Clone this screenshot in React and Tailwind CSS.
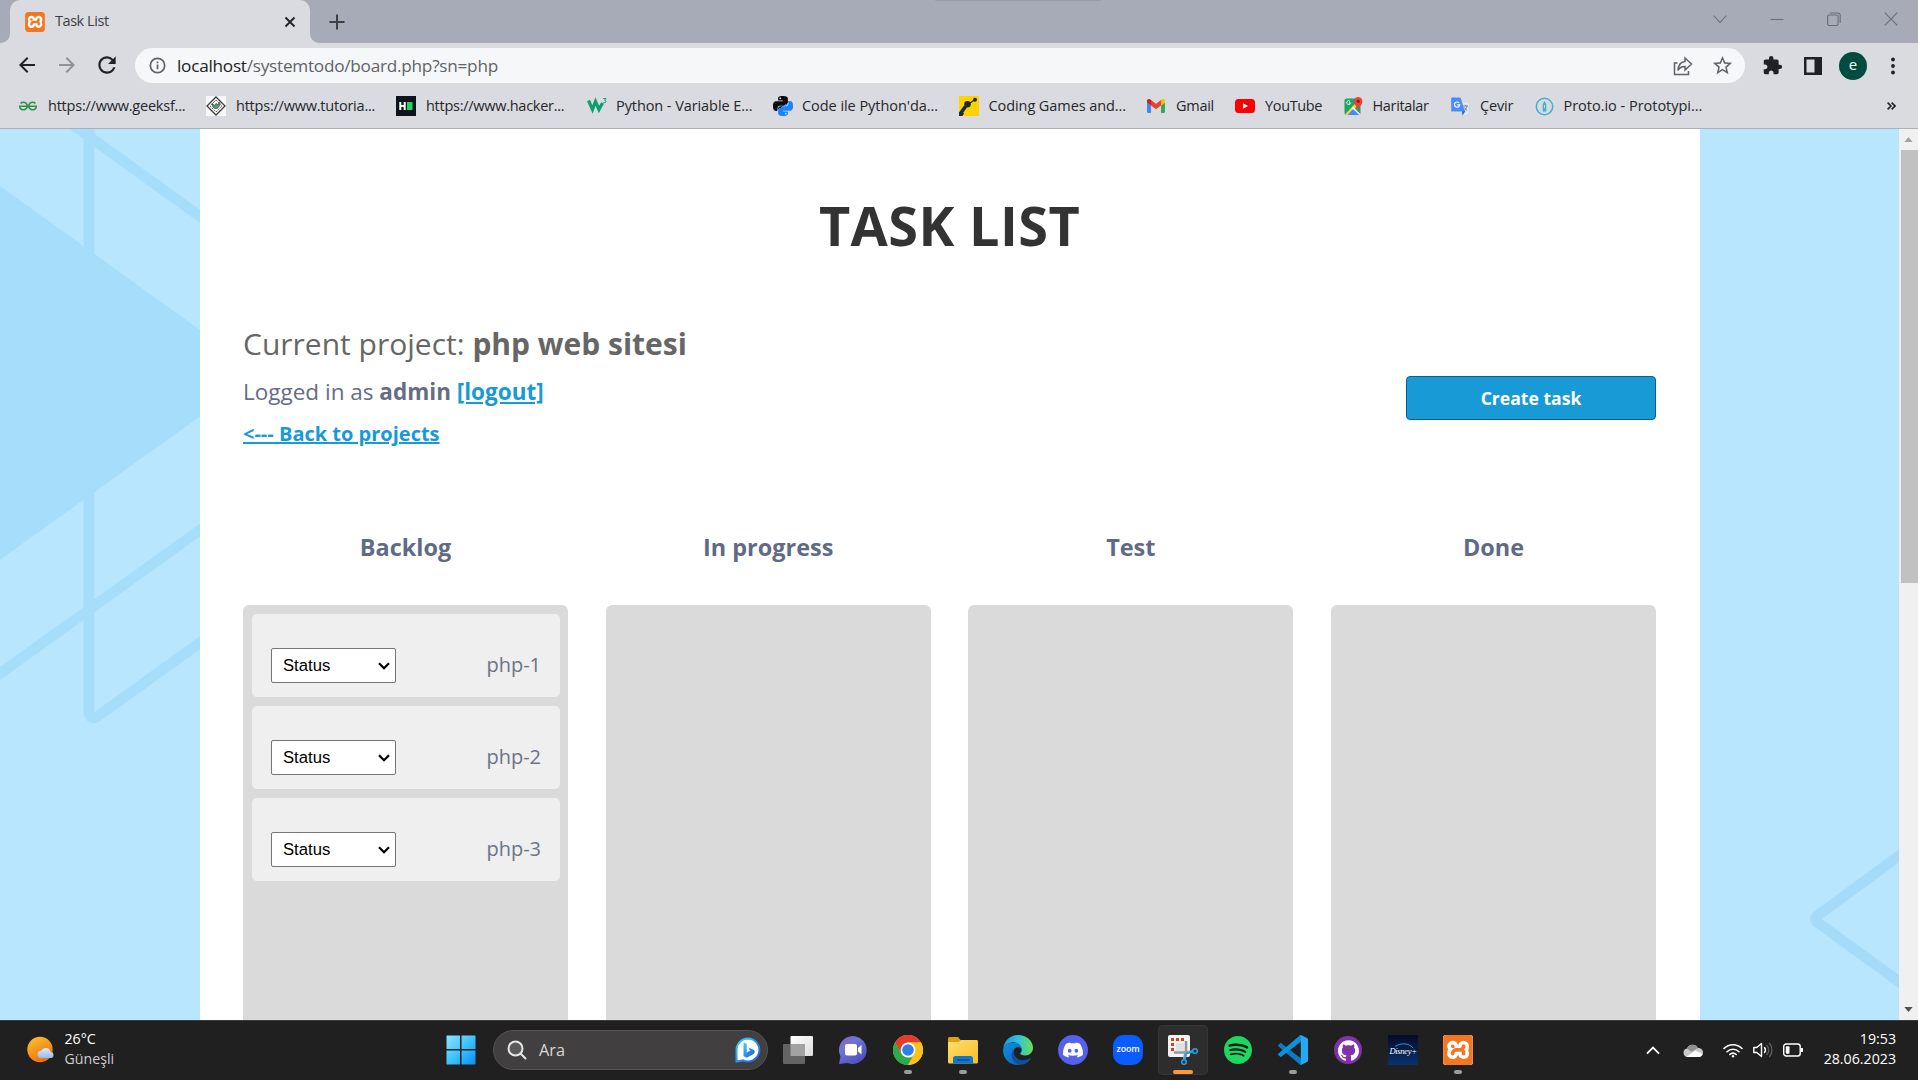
import React from "react";
import { MdExtension, MdStarBorder, MdRefresh, MdArrowBack, MdArrowForward } from "react-icons/md";
import { SiXampp, SiGeeksforgeeks, SiPython, SiSpotify, SiDiscord, SiGithub } from "react-icons/si";

/* ---------- Browser icons ---------- */

function XamppIcon({ className }) {
  return (
    <span className={`flex items-center justify-center overflow-hidden rounded-[3px] bg-white ${className}`}>
      <SiXampp className="size-full text-[#f37623]" />
    </span>
  );
}

function TutorialIcon() {
  return (
    <svg viewBox="0 0 20 20" className="size-5">
      <rect width="20" height="20" fill="#f7f7f7" />
      <path d="M10 1 19 10 10 19 1 10Z" fill="#fff" stroke="#3a3a3a" strokeWidth="1.3" />
      <path d="M10 4 16 10 10 16 4 10Z" fill="none" stroke="#555" strokeWidth="0.9" strokeDasharray="2 1" />
      <path d="M6 7.500c.5 7 7.500 7 8-1l-2.500 2-1.500-1-1.500 2Z" fill="#5c9a6e" stroke="#2e4637" strokeWidth="0.8" />
    </svg>
  );
}

function HackerIcon() {
  return (
    <svg viewBox="0 0 20 20" className="size-5">
      <rect width="20" height="20" fill="#0e141e" />
      <path d="M4.300 6v8M8.700 6v8M4.300 10h4.400" stroke="#fff" strokeWidth="2" />
      <rect x="11" y="6" width="5.500" height="8" fill="#1ed760" />
    </svg>
  );
}

function W3Icon() {
  return (
    <svg viewBox="0 0 20 20" className="size-5" fill="none" stroke="#0e9e6e">
      <path d="M1.500 4.500 5.500 13.500 8.500 5.500 12 13.500 15.500 7" strokeWidth="3.200" />
      <path d="M16.300 2.500h2.700l-1.500 1.700c2 0 2 2.600-.4 2.600-.4 0-.7-.1-1-.4" strokeWidth="1" />
    </svg>
  );
}

function CodingIcon() {
  return (
    <svg viewBox="0 0 20 20" className="size-5">
      <rect width="20" height="20" fill="#ffd200" />
      <path d="M0 19.500 6.500 10.500" stroke="#1b2a35" strokeWidth="3.600" />
      <circle cx="8.500" cy="8.300" r="3.300" fill="#1b2a35" />
      <path d="M9 8.500 16 3.500" stroke="#1b2a35" strokeWidth="1.200" />
      <circle cx="16" cy="3.800" r="2" fill="#1b2a35" />
      <path d="M0 20 0 16.500 2.500 15.500 5 17.500 3.500 20Z" fill="#1b2a35" />
    </svg>
  );
}

function GmailIcon() {
  return (
    <svg viewBox="0 0 18 14" className="h-[14px] w-[18px]">
      <path d="M0 2v10.800C0 13.500.5 14 1.200 14H4V6.500L0 3.500Z" fill="#4285f4" />
      <path d="M18 2v10.800c0 .7-.5 1.200-1.200 1.200H14V6.500l4-3Z" fill="#34a853" />
      <path d="M0 2C0 .2 2 -.6 3.300.5L4 1v5.500L0 3.500Z" fill="#c5221f" />
      <path d="M18 2c0-1.800-2-2.600-3.300-1.500L14 1v5.500l4-3Z" fill="#fbbc04" />
      <path d="M4 1 9 4.800 14 1v5.500l-5 3.800-5-3.800Z" fill="#ea4335" />
    </svg>
  );
}

function YouTubeIcon() {
  return (
    <svg viewBox="0 0 20 14" className="h-[14px] w-5">
      <rect width="20" height="14" rx="3.500" fill="#f00" />
      <path d="M8 4.200v5.600L13 7Z" fill="#fff" />
    </svg>
  );
}

function MapsIcon() {
  return (
    <svg viewBox="0 0 19 19" className="size-[19px]">
      <rect x="0.500" y="1.500" width="16" height="16.500" rx="2" fill="#1fa463" />
      <path d="M9 9.500 17 18H1Z" fill="#4a89f3" />
      <path d="M1 17.500 15 2.500 17 5 4 18.200Z" fill="#fbd24a" />
      <path d="M9 9.500 17 18H14L7.500 11.500Z" fill="#fff" />
      <path d="M9 12 15.500 18H3.500Z" fill="#4a89f3" />
      <path d="M14 13C13.500 9.500 10 8 10 4.200a4.200 4.200 0 0 1 8.400 0C18.400 8 14.800 9.500 14 13Z" fill="#e94235" />
      <circle cx="14.200" cy="4.200" r="1.500" fill="#7d1e18" />
      <path d="M6 4.300a1.900 1.900 0 1 0 .5 1.500H5" stroke="#fff" strokeWidth="0.900" fill="none" />
    </svg>
  );
}

function TranslateIcon() {
  return (
    <svg viewBox="0 0 19 19" className="size-[19px]">
      <path d="M8 5h9.500c.6 0 1 .4 1 1v11c0 .6-.4 1-1 1H11Z" fill="#e4e6ea" stroke="#c5c8ce" strokeWidth="0.500" />
      <path d="M11 14h3.500L11.500 18.500Z" fill="#3a5bbf" />
      <path d="M1.200.5H9.500L14 14.500H1.200c-.6 0-1-.4-1-1v-12c0-.6.4-1 1-1Z" fill="#4b8df8" />
      <path d="M8 5.800A2.600 2.600 0 1 0 8.700 7.800H6.300" stroke="#fff" strokeWidth="1.200" fill="none" />
      <path d="M12.300 9H17M14.700 8v1M16 9.200c-.4 2-1.500 3.400-2.700 4.300M13.400 10.500c.6 1.400 1.600 2.400 2.800 3" stroke="#6a7a8c" strokeWidth="0.900" fill="none" />
    </svg>
  );
}

function ProtoIcon() {
  return (
    <svg viewBox="0 0 19 19" className="size-[19px]">
      <circle cx="9.500" cy="9.500" r="8.200" fill="none" stroke="#3bb3cd" strokeWidth="1.500" />
      <path d="M9.500 4 11.300 7v7.500H7.700V7Z" fill="#3bb3cd" />
      <path d="M9.500 8v3" stroke="#d9dbe0" strokeWidth="0.900" />
    </svg>
  );
}

function PythonIcon() {
  return (
    <svg viewBox="0 0 24 24" className="size-5">
      <defs>
        <linearGradient id="py" x1="0.150" y1="0" x2="0.850" y2="1">
          <stop offset="0.500" stopColor="#0b0b0b" />
          <stop offset="0.500" stopColor="#1684fb" />
        </linearGradient>
      </defs>
      <SiPython size={24} fill="url(#py)" />
    </svg>
  );
}

const bookmarks = [
  { label: "https://www.geeksf...", icon: <SiGeeksforgeeks className="size-[18px] text-[#2f8d46]" />, item: "w-[186px] pl-[19px]", gap: "w-[29px]", track: "tracking-[-0.220px]" },
  { label: "https://www.tutoria...", icon: <TutorialIcon />, item: "w-[190px] pl-[20px]", gap: "w-[30px]", track: "tracking-[-0.220px]" },
  { label: "https://www.hacker...", icon: <HackerIcon />, item: "w-[191px] pl-[20px]", gap: "w-[30px]", track: "tracking-[-0.270px]" },
  { label: "Python - Variable E...", icon: <W3Icon />, item: "w-[186px] pl-[20px]", gap: "w-[29px]", track: "tracking-[-0.080px]" },
  { label: "Code ile Python'da...", icon: <PythonIcon />, item: "w-[186px] pl-[20px]", gap: "w-[29px]", track: "tracking-[-0.050px]" },
  { label: "Coding Games and...", icon: <CodingIcon />, item: "w-[188px] pl-[20px]", gap: "w-[29.5px]", track: "tracking-[-0.080px]" },
  { label: "Gmail", icon: <GmailIcon />, item: "w-[87px] pl-[20px]", gap: "w-[29px]", track: "tracking-[-0.270px]" },
  { label: "YouTube", icon: <YouTubeIcon />, item: "w-[109px] pl-[21px]", gap: "w-[30px]", track: "tracking-[-0.350px]" },
  { label: "Haritalar", icon: <MapsIcon />, item: "w-[106px] pl-[21px]", gap: "w-[28.5px]", track: "tracking-[-0.340px]" },
  { label: "Çevir", icon: <TranslateIcon />, item: "w-[84px] pl-[22px]", gap: "w-[29px]", track: "tracking-[-0.150px]" },
  { label: "Proto.io - Prototypi...", icon: <ProtoIcon />, item: "w-[190px] pl-[22px]", gap: "w-[28.5px]", track: "tracking-[-0.020px]" },
];

/* ---------- Browser chrome ---------- */

function TabStrip() {
  return (
    <div className="relative flex h-[43px] justify-between bg-[#a7abb7]">
      <div className="absolute left-[935px] top-0 h-px w-[166px] rounded-b bg-[#999dab]" />
      <div className="flex">
        <div className="flex w-[10px] items-end">
          <svg viewBox="0 0 10 10" className="size-[10px]"><path d="M10 0v10H0C6 10 10 6 10 0Z" fill="#d9dbe0" /></svg>
        </div>
        <div className="flex w-[300px] items-center rounded-t-[10px] bg-[#d9dbe0] pl-[15px] pr-[14px]">
          <XamppIcon className="size-5" />
          <span className="ml-[10px] flex-1 pb-[2px] text-[14.5px] leading-[40px] tracking-[-0.450px] text-[#3c4043]">Task List</span>
          <svg viewBox="0 0 12 12" className="size-[12px]" stroke="#202124" strokeWidth="1.800"><path d="M1.500 1.500l9 9M10.500 1.500l-9 9" /></svg>
        </div>
        <div className="flex w-[10px] items-end">
          <svg viewBox="0 0 10 10" className="size-[10px]"><path d="M0 0v10H10C4 10 0 6 0 0Z" fill="#d9dbe0" /></svg>
        </div>
        <div className="flex items-center pl-[9px]">
          <svg viewBox="0 0 16 16" className="size-4" stroke="#3c4043" strokeWidth="2"><path d="M8 0.500v15M.5 8h15" /></svg>
        </div>
      </div>
      <div className="flex h-[37px] items-center gap-[43px] pr-[20px] text-[#6a6d78]">
        <svg viewBox="0 0 14 14" className="size-[14px]" fill="none" stroke="currentColor" strokeWidth="1.100"><path d="M.5 3.500 7 10.500 13.500 3.500" /></svg>
        <svg viewBox="0 0 14 14" className="size-[14px]" fill="none" stroke="currentColor" strokeWidth="1.100"><path d="M.5 7.500h13" /></svg>
        <svg viewBox="0 0 14 14" className="size-[14px]" fill="none" stroke="currentColor" strokeWidth="1.100"><rect x="0.600" y="3" width="10.500" height="10.500" rx="1.500" /><path d="M3 1h7.500c1.600 0 2.700 1 2.700 2.500V11" /></svg>
        <svg viewBox="0 0 14 14" className="size-[14px]" fill="none" stroke="currentColor" strokeWidth="1.100"><path d="M.7.7l12.600 12.600M13.300.7.7 13.300" /></svg>
      </div>
    </div>
  );
}

function Toolbar() {
  return (
    <div className="flex h-[45px] items-center bg-[#d9dbe0] pr-[14px]">
      <div className="flex w-[135px] items-center pb-px pl-[15px]">
        <MdArrowBack className="size-[24px] text-[#202124]" />
        <MdArrowForward className="ml-[16px] size-[24px] text-[#909298]" />
        <MdRefresh className="ml-[15px] size-[26px] text-[#202124]" />
      </div>
      <div className="flex h-[35px] w-[1610px] items-center rounded-full bg-[#f5f7f9] pl-[14px] pr-[11px] text-[#5f6368]">
        <svg viewBox="0 0 18 18" className="size-[17px]" fill="none" stroke="currentColor" strokeWidth="1.800"><circle cx="9" cy="9" r="7.600" /><path d="M9 8v5M9 4.700v1.800" /></svg>
        <span className="ml-[11px] flex-1 text-[17.2px] leading-[34px] tracking-[-0.250px]"><span className="text-[#202124]">localhost</span>/systemtodo/board.php?sn=php</span>
        <svg viewBox="0 0 20 20" className="size-5" fill="none" stroke="currentColor" strokeWidth="1.500"><path d="M4.500 7H1.500V18.500H15.500V15M12 2l6.500 6L12 14V10.500C8.500 10.500 6.300 11.700 5 14.500 5.200 9.500 7.800 6 12 5.500Z" /></svg>
        <MdStarBorder className="ml-[18px] size-[23px]" />
      </div>
      <div className="flex flex-1 items-center pl-[17px] text-[#202124]">
        <MdExtension className="size-[21px]" />
        <svg viewBox="0 0 18 18" className="ml-[21px] size-[18px]"><path d="M0 0h18v18H0Z M2.500 2.500v13h8v-13Z" fill="currentColor" fillRule="evenodd" /></svg>
        <span className="ml-[17px] flex size-7 items-center justify-center rounded-full bg-[#004d40] pb-[2px] text-[15px] text-white">e</span>
        <svg viewBox="0 0 4 18" className="ml-[24px] h-[18px] w-1" fill="currentColor"><circle cx="2" cy="2.500" r="1.900" /><circle cx="2" cy="9" r="1.900" /><circle cx="2" cy="15.500" r="1.900" /></svg>
      </div>
    </div>
  );
}

function BookmarksBar() {
  return (
    <div className="flex h-[41px] items-center justify-between border-b border-[#aeafb3] bg-[#d9dbe0] pb-[4px] pr-[22px] text-[14.5px] text-[#26272a]">
      <div className="flex">
        {bookmarks.map((b) => (
          <div key={b.label} className={`flex items-center whitespace-nowrap ${b.item}`}>
            <span className={`flex shrink-0 ${b.gap}`}>{b.icon}</span>
            <span className={`leading-[24px] ${b.track}`}>{b.label}</span>
          </div>
        ))}
      </div>
      <svg viewBox="0 0 9 8" className="h-[8px] w-[9px]" fill="none" stroke="#202124" strokeWidth="1.600"><path d="M.6.6 4 4 .6 7.400M4.600.6 8 4 4.600 7.400" /></svg>
    </div>
  );
}

/* ---------- Page ---------- */

function LeftArt() {
  return (
    <svg viewBox="0 0 200 891" className="h-full w-[200px] shrink-0 bg-[#b8e6ff]">
      <path d="M0 57 L200 201 V287.600 L0 430.700Z" fill="#a6ddfb" />
      <g fill="none" stroke="#a6ddfb" strokeWidth="10.600">
        <path d="M88.900 -5V583Q89 590 96 588.500L205 510" strokeLinejoin="round" />
        <path d="M60 -13.500 205 91" />
        <path d="M-5 548 205 397.500" />
      </g>
    </svg>
  );
}

function RightArt() {
  return (
    <svg viewBox="0 0 199 891" className="h-full w-[199px] shrink-0 bg-[#b8e6ff]">
      <path d="M205 722.500 119 785.500Q112 790 119 794.500L205 857" fill="none" stroke="#a5daf9" strokeWidth="10.600" strokeLinejoin="round" />
    </svg>
  );
}

function TaskCard({ name }) {
  return (
    <div className="flex h-[83px] items-start justify-between rounded-[5px] bg-[#efefef] px-[19px] pt-[34px]">
      <button className="flex h-[35px] w-[125px] items-center justify-between rounded-[2px] border border-[#767676] bg-white pl-[11px] pr-[5px] font-['Liberation_Sans',Arial,sans-serif] text-[16.67px] text-black">
        Status
        <svg viewBox="0 0 12 8" className="h-[8px] w-[12px]" fill="none" stroke="#000" strokeWidth="2.200"><path d="M1 1.200 6 6.200 11 1.200" /></svg>
      </button>
      <span className="text-[20px] leading-[33px] text-[#6b7488]">{name}</span>
    </div>
  );
}

const columns = [
  { title: "Backlog", tasks: ["php-1", "php-2", "php-3"] },
  { title: "In progress", tasks: [] },
  { title: "Test", tasks: [] },
  { title: "Done", tasks: [] },
];

function Board() {
  return (
    <div className="mt-[77px] flex min-h-0 flex-1 justify-between">
      {columns.map((c) => (
        <div key={c.title} className="flex w-[325px] flex-col">
          <h2 className="mb-10 text-center text-[23.44px] font-bold leading-[36px] text-[#5f6b85]">{c.title}</h2>
          <div className="flex flex-1 flex-col gap-[9px] rounded-t-[6px] bg-[#dadada] pl-[9px] pr-[8px] pt-[9px]">
            {c.tasks.map((t) => <TaskCard key={t} name={t} />)}
          </div>
        </div>
      ))}
    </div>
  );
}

function Scrollbar() {
  return (
    <div className="flex w-[19px] shrink-0 flex-col items-center justify-between bg-[#f0f0f0]">
      <div className="flex w-full flex-col items-center">
        <div className="flex h-[21px] items-center"><svg viewBox="0 0 10 6" className="h-[5px] w-[9px]"><path d="M0 6 5 0l5 6Z" fill="#a3a3a3" /></svg></div>
        <div className="ml-[1px] h-[433px] w-[17px] bg-[#c1c1c1]" />
      </div>
      <div className="flex h-[21px] items-center"><svg viewBox="0 0 10 6" className="h-[5px] w-[9px]"><path d="M0 0h10L5 6Z" fill="#505050" /></svg></div>
    </div>
  );
}

function Page() {
  return (
    <div className="flex h-[891px]">
      <LeftArt />
      <main className="flex w-[1500px] flex-col bg-white px-[43px] pr-[44px] pt-[61px]">
        <h1 className="text-center text-[54px] font-bold leading-[70px] tracking-[0.400px] text-[#333]">TASK LIST</h1>
        <div className="mt-[60px] flex items-start justify-between">
          <div>
            <p className="text-[30px] leading-[48px] text-[#666]">Current project: <b>php web sitesi</b></p>
            <p className="text-[22.5px] leading-[48px] text-[#646d84]">Logged in as <b>admin</b> <a className="font-bold text-[#189ad6] underline">[logout]</a></p>
            <p className="text-[20px] font-bold leading-[36px] text-[#189ad6] underline">{"<--- Back to projects"}</p>
          </div>
          <button className="mt-[56px] h-[44px] w-[250px] rounded-[4px] border border-[#0f5f88] bg-[#189ad6] text-[17.6px] font-bold text-white">Create task</button>
        </div>
        <Board />
      </main>
      <RightArt />
      <Scrollbar />
    </div>
  );
}

/* ---------- Taskbar ---------- */

function WeatherIcon() {
  return (
    <svg viewBox="0 0 28 28" className="size-7">
      <defs>
        <linearGradient id="sun" x1="0.200" y1="0" x2="0.700" y2="1"><stop stopColor="#f7c02f" /><stop offset="1" stopColor="#f2690d" /></linearGradient>
        <linearGradient id="cloud" x1="0" y1="0" x2="0" y2="1"><stop stopColor="#dbe8fb" /><stop offset="1" stopColor="#9bb9ee" /></linearGradient>
      </defs>
      <circle cx="13" cy="13.500" r="12.700" fill="url(#sun)" />
      <path d="M14 22a3.600 3.600 0 0 1 .2-7.200 5 5 0 0 1 9.300 1A3.200 3.200 0 0 1 24.500 22Z" fill="url(#cloud)" />
    </svg>
  );
}

function WindowsIcon() {
  return (
    <svg viewBox="0 0 30 30" className="size-[30px]">
      <defs><linearGradient id="win" x1="0" y1="0" x2="1" y2="1"><stop stopColor="#8fe3ff" /><stop offset="0.500" stopColor="#3fc3ff" /><stop offset="1" stopColor="#0a8ef8" /></linearGradient></defs>
      <path d="M1 .5H14V14H.5V1ZM15.500.5H29L29.500 1V14H15.500ZM.5 15.500H14V29.500H1L.5 29ZM15.500 15.500H29.500V29L29 29.500H15.500Z" fill="url(#win)" />
    </svg>
  );
}

function BingIcon() {
  return (
    <svg viewBox="0 0 26 26" className="size-[26px]">
      <defs>
        <linearGradient id="bingRing" x1="0" y1="0" x2="1" y2="1"><stop stopColor="#35d5f5" /><stop offset="0.500" stopColor="#2f8fee" /><stop offset="1" stopColor="#1a5fd8" /></linearGradient>
      </defs>
      <path d="M13 1.500a11.500 11.500 0 1 1-5 21.900L1.500 24.500V13A11.500 11.500 0 0 1 13 1.500Z" fill="#fff" stroke="url(#bingRing)" strokeWidth="2" />
      <path d="M8.500 5.500 11.700 6.700V15.500L15 13.700 13.300 10.500 19 13C20 14 20 16 18.600 17L11.700 20.800 8.500 19Z" fill="url(#bingRing)" />
    </svg>
  );
}

function TaskViewIcon() {
  return (
    <svg viewBox="0 0 30 30" className="size-[30px]">
      <defs><linearGradient id="tv" x1="0" y1="0" x2="1" y2="1"><stop stopColor="#fff" /><stop offset="1" stopColor="#dcdcdc" /></linearGradient></defs>
      <rect x="7.500" y="1" width="22.500" height="20" rx="1" fill="url(#tv)" />
      <rect y="9" width="22" height="20" rx="1" fill="#646464" />
      <path d="M7.500 9H22v12H7.500Z" fill="#a2a2a2" />
    </svg>
  );
}

function ChatIcon() {
  return (
    <svg viewBox="0 0 30 30" className="size-[30px]">
      <defs><linearGradient id="chat" x1="0" y1="0" x2="0.700" y2="1"><stop stopColor="#8a63b8" /><stop offset="0.400" stopColor="#6f74d8" /><stop offset="1" stopColor="#4b50c0" /></linearGradient></defs>
      <path d="M15 1a14 14 0 1 1-5.500 27L1 29l1.500-7.500A14 14 0 0 1 15 1Z" fill="url(#chat)" />
      <rect x="7" y="9" width="12" height="11.500" rx="2" fill="#fff" />
      <path d="M20 13 23.500 10V19.500L20 16.500Z" fill="#fff" />
    </svg>
  );
}

function ChromeIcon() {
  return (
    <svg viewBox="0 0 30 30" className="size-[30px]">
      <circle cx="15" cy="15" r="15" fill="#fbbc05" />
      <path d="M2 7.500A15 15 0 0 1 28 7.500H15L8.500 18.700Z" fill="#e33b2e" />
      <path d="M2 7.500 8.500 18.800 15 22.500H21.500L15 30A15 15 0 0 1 2 7.500Z" fill="#2da94f" />
      <path d="M15 7.500H28A15 15 0 0 1 15 30L21.500 18.700Z" fill="#fcc31e" />
      <circle cx="15" cy="15" r="7.400" fill="#fff" />
      <circle cx="15" cy="15" r="5.800" fill="#2f7de9" />
    </svg>
  );
}

function FolderIcon() {
  return (
    <svg viewBox="0 0 30 30" className="size-[30px]">
      <defs><linearGradient id="fold" x1="0" y1="0" x2="1" y2="1"><stop stopColor="#ffdf70" /><stop offset="1" stopColor="#fbbd22" /></linearGradient></defs>
      <path d="M0 3.500C0 2.600.6 2 1.500 2H10l3 3.500V10H0Z" fill="#e0a010" />
      <path d="M0 7H10.500L13 5H28.500c.9 0 1.500.6 1.500 1.500V27c0 .8-.6 1.500-1.500 1.500H1.500C.7 28.500 0 27.800 0 27Z" fill="url(#fold)" />
      <path d="M5 28.500V23.500c0-1.400 1-2.500 2.500-2.500h15c1.400 0 2.500 1 2.500 2.500v5Z" fill="#1177cc" />
      <path d="M9 25h12" stroke="#0a4f96" strokeWidth="1.500" />
    </svg>
  );
}

function EdgeIcon() {
  return (
    <svg viewBox="0 0 30 30" className="size-[30px]">
      <defs>
        <linearGradient id="edgeTop" x1="0" y1="0.500" x2="1" y2="0.500"><stop stopColor="#1d95de" /><stop offset="0.500" stopColor="#2fc2df" /><stop offset="1" stopColor="#6be04d" /></linearGradient>
        <linearGradient id="edgeLow" x1="0" y1="0" x2="1" y2="1"><stop stopColor="#1490df" /><stop offset="1" stopColor="#0a5fb5" /></linearGradient>
      </defs>
      <path d="M.3 13.500C1 5.500 7.300 0 15 0c8.500 0 15 6 15 12.800 0 4.600-3.600 7.700-7.800 7.700-3.200 0-5-.8-5-1.900 0-.8 1.500-1.200 1.500-3.600C18.700 10.500 13.500 6.500 8.500 7.500 5 8.200 1.500 10 .3 13.500Z" fill="url(#edgeTop)" />
      <path d="M.1 15C.5 10 5.500 7.400 10 7.400c5.500 0 8.700 3.600 8.700 7-.8-1.600-2.200-2.400-4-2.200-3 .4-5.200 3.300-5 7.300.2 4.500 3.300 8.700 8.300 10.200C8.500 31.500 0 25 .1 15Z" fill="url(#edgeLow)" />
      <path d="M11.800 14.200c-2.600 5.500 1.700 11 8 11 2.800 0 5-.9 7.400-2.200.6-.3 1 .2.600.8C25.500 27.500 21.500 30 17.500 29.700 9 29 5.500 18 11.800 14.200Z" fill="#0f4fa0" />
    </svg>
  );
}

function DiscordIcon() {
  return (
    <span className="flex size-[30px] items-center justify-center rounded-full bg-[#5560ee]">
      <SiDiscord className="size-[20px] text-white" />
    </span>
  );
}

function ZoomIcon() {
  return (
    <span className="flex size-[30px] items-center justify-center rounded-[11px] bg-[#0b5cff] pb-[2px] text-[8.800px] font-semibold tracking-[-0.100px] text-white">zoom</span>
  );
}

function SnippingIcon() {
  return (
    <svg viewBox="0 0 30 30" className="size-[30px]">
      <rect width="22" height="22" rx="2" fill="#f3f3f3" />
      <g fill="#d8401c">
        <rect x="3" y="3" width="3" height="3" /><rect x="8" y="3" width="3" height="3" /><rect x="13" y="3" width="3" height="3" />
        <rect x="3" y="8" width="3" height="3" /><rect x="3" y="13" width="3" height="3" />
      </g>
      <path d="M18 6v10.500L16 24M6 17.500h11.500L24 16.500" stroke="#8f9aa3" strokeWidth="2.600" fill="none" />
      <path d="M8 8h8.500v8H8Z" fill="#dfe2e5" />
      <circle cx="27" cy="16" r="2.300" fill="none" stroke="#27a0e6" strokeWidth="1.600" />
      <circle cx="16" cy="27" r="2.300" fill="none" stroke="#27a0e6" strokeWidth="1.600" />
      <path d="M24.500 16.800 18.500 18.500 16.700 24.500" stroke="#27a0e6" strokeWidth="1.800" fill="none" />
    </svg>
  );
}

function SpotifyIcon() {
  return (
    <span className="flex size-[28px] items-center justify-center rounded-full bg-[#0c1d12]">
      <SiSpotify className="size-[28px] text-[#1ed760]" />
    </span>
  );
}

function VsCodeIcon() {
  return (
    <svg viewBox="0 0 30 30" className="size-[30px]">
      <path d="M0 10.300 2 8.400c.5-.4 1.100-.4 1.600 0L23 23.500V29.500c-.6.3-1 .1-1.500-.3L.3 11.300C-.1 11-.1 10.600 0 10.300Z" fill="#0b7cc4" />
      <path d="M0 19.700 2 21.600c.5.400 1.100.4 1.600 0L23 6.500V.5c-.6-.3-1-.1-1.500.3L.3 18.700c-.4.3-.4.700-.3 1Z" fill="#0c93dc" />
      <path d="M21.500.8C22 .2 22.700 0 23.400.3L29 3c.6.300 1 .9 1 1.600v20.800c0 .7-.4 1.300-1 1.600l-5.600 2.700c-.7.300-1.400.1-1.900-.5.700.5 1.300 0 1.300-.8V1.600c0-.8-.6-1.300-1.300-.8Z" fill="#25a9f3" />
    </svg>
  );
}

function GithubIcon() {
  return (
    <span className="flex size-[28px] items-center justify-center rounded-full bg-[#8032a6]">
      <SiGithub className="size-[21px] text-white" />
    </span>
  );
}

function DisneyIcon() {
  return (
    <span className="relative flex size-[30px] items-center justify-center bg-linear-to-b from-[#060a2c] to-[#06336e] pt-[2px] font-['Liberation_Serif',serif] text-[8.500px] font-normal italic tracking-[-0.300px] text-white">
      Disney+
      <svg viewBox="0 0 30 30" className="absolute inset-0 size-[30px]" fill="none"><path d="M7 11.500C13 7.500 21 8 25 13" stroke="#2a9ec4" strokeWidth="1" /></svg>
    </span>
  );
}

const apps = [
  { id: "taskview", icon: <TaskViewIcon /> },
  { id: "chat", icon: <ChatIcon /> },
  { id: "chrome", icon: <ChromeIcon />, open: true },
  { id: "files", icon: <FolderIcon />, open: true },
  { id: "edge", icon: <EdgeIcon /> },
  { id: "discord", icon: <DiscordIcon /> },
  { id: "zoom", icon: <ZoomIcon /> },
  { id: "snip", icon: <SnippingIcon />, active: true },
  { id: "spotify", icon: <SpotifyIcon /> },
  { id: "vscode", icon: <VsCodeIcon />, open: true },
  { id: "github", icon: <GithubIcon /> },
  { id: "disney", icon: <DisneyIcon /> },
  { id: "xampp", icon: <XamppIcon className="size-[30px]" />, open: true },
];

function AppButton({ app }) {
  return (
    <div className={`flex h-[50px] w-[50px] flex-col items-center rounded-[5px] pt-[10px] ${app.active ? "bg-[#2d2d2d] ring-1 ring-inset ring-[#363636]" : ""}`}>
      <div className="flex h-[30px] items-center justify-center">{app.icon}</div>
      {app.open && <div className="mt-[5px] h-[4px] w-[8px] rounded-full bg-[#9a9a9a]" />}
      {app.active && <div className="mt-[5px] h-[4px] w-[20px] rounded-full bg-[#f99a43]" />}
    </div>
  );
}

function Taskbar() {
  return (
    <div className="flex h-[60px] items-center justify-between border-t border-[#3c3c3c] bg-[#202020] pb-px pl-[27px] pr-[22px] text-[14.2px] leading-[20px] text-white">
      <div className="flex w-[419px] items-center gap-[9.5px]">
        <WeatherIcon />
        <div className="pb-[2px]"><div>26°C</div><div className="text-[#cfcfcf]">Güneşli</div></div>
      </div>
      <div className="flex flex-1 items-center">
        <WindowsIcon />
        <div className="ml-[17px] flex h-[40px] w-[275px] items-center rounded-full border border-[#545252] bg-[#413f3f] pl-[13px] pr-[6px]">
          <svg viewBox="0 0 20 20" className="size-5" fill="none" stroke="#e6e6e6" strokeWidth="2"><circle cx="8.500" cy="8.500" r="7" fill="#5b5b5b" /><path d="M13.500 13.500 18.500 18.500" strokeLinecap="round" /></svg>
          <span className="ml-[12px] flex-1 text-[16.3px] text-[#d8d8d8]">Ara</span>
          <BingIcon />
        </div>
        <div className="ml-[5px] flex gap-[5px]">{apps.map((a) => <AppButton key={a.id} app={a} />)}</div>
      </div>
      <div className="flex items-center">
        <svg viewBox="0 0 14 9" className="h-[9px] w-[14px]" fill="none" stroke="#fff" strokeWidth="1.800"><path d="M1 7.700 7 1.500 13 7.700" /></svg>
        <svg viewBox="0 0 20 13" className="ml-[23px] h-[13px] w-5">
          <path d="M4.500 13A4.300 4.300 0 0 1 4 4.500 6 6 0 0 1 15 4 4.500 4.500 0 0 1 16 13Z" fill="#c9c9c9" />
          <path d="M4 4.500A6 6 0 0 1 15 4L8.500 7.800Z" fill="#8f8f8f" />
          <path d="M3 13 12.500 6.500 19.500 10C19 12 17.500 13 16 13Z" fill="#fff" />
        </svg>
        <svg viewBox="0 0 20 15" className="ml-[20px] h-[15px] w-5" fill="none" stroke="#fff" strokeWidth="1.600" strokeLinecap="round"><path d="M1 5.500a12.700 12.700 0 0 1 18 0M4 8.700a8.400 8.400 0 0 1 12 0M6.800 11.500a4.500 4.500 0 0 1 6.400 0" /><circle cx="10" cy="13.200" r="1.200" fill="#fff" stroke="none" /></svg>
        <svg viewBox="0 0 20 16" className="ml-[10px] h-4 w-5" fill="none" stroke="#fff" strokeWidth="1.400" strokeLinecap="round" strokeLinejoin="round"><path d="M.8 5.500h3L8.500 1.500v13L3.800 10.500h-3Z" /><path d="M11.500 5.500a4 4 0 0 1 0 5" /><path d="M14 3.500a7 7 0 0 1 0 9M16.500 1.300a10.500 10.500 0 0 1 0 13.400" stroke="#5d5d5d" /></svg>
        <svg viewBox="0 0 20 14" className="ml-[10px] h-[14px] w-5"><rect x="0.700" y="1" width="16.500" height="12" rx="2.500" fill="none" stroke="#fff" strokeWidth="1.400" /><rect x="2.800" y="3.200" width="3.700" height="7.600" rx="1" fill="#fff" /><path d="M18 5h1c.6 0 1 .5 1 1v2c0 .6-.4 1-1 1h-1Z" fill="#fff" /></svg>
        <div className="ml-[21px] pb-[2px] text-right"><div>19:53</div><div>28.06.2023</div></div>
      </div>
    </div>
  );
}

export default function App() {
  return (
    <div className="h-[1080px] w-[1918px] overflow-hidden bg-white font-['Open_Sans','Noto_Sans',sans-serif]">
      <TabStrip />
      <Toolbar />
      <BookmarksBar />
      <Page />
      <Taskbar />
    </div>
  );
}
